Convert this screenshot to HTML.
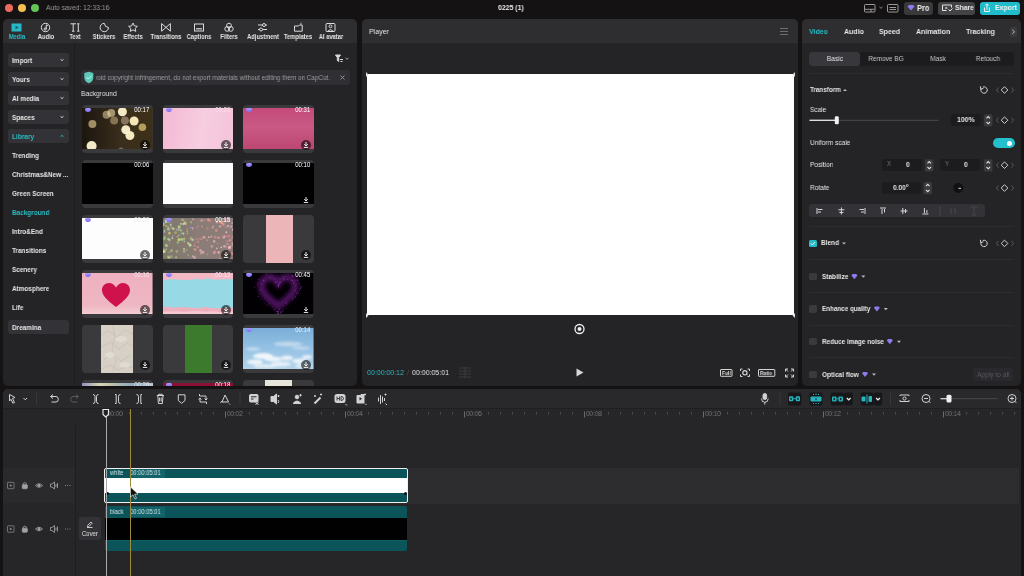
<!DOCTYPE html>
<html><head><meta charset="utf-8">
<style>
*{margin:0;padding:0;box-sizing:border-box}
html,body{width:1024px;height:576px;overflow:hidden;background:#141213;font-family:"Liberation Sans",sans-serif;color:#e6e6e6;position:relative}
.a{position:absolute}
.t{position:absolute;will-change:transform;white-space:nowrap;height:12px;line-height:12px;font-size:7.6px;transform:scaleX(.87);transform-origin:0 50%}
.t.c{transform-origin:50% 50%}
.b{font-weight:bold}
.c{text-align:center}
.panel{position:absolute;background:#242325;border-radius:5px;overflow:hidden}
.hdr{position:absolute;background:#2e2d2f}
.btn{position:absolute;background:#333236;border-radius:3px}
.card{position:absolute;width:70.5px;height:47.5px;background:#3a393b;border-radius:4px;overflow:hidden}
.img{position:absolute;left:0;right:0;top:2.8px;bottom:3.3px;overflow:hidden}
.dl{position:absolute;right:2.5px;bottom:3px;width:10px;height:10px;border-radius:50%;background:rgba(0,0,0,.58)}
.dur{position:absolute;right:3px;top:1px;font-size:6.9px;line-height:7px;color:#fff;transform:scaleX(.87);transform-origin:100% 50%}
.gem{position:absolute;left:3px;top:2.5px;width:6px;height:4.5px;background:linear-gradient(180deg,#a99cff,#7d6cf0);border-radius:2px 2px 3px 3px}
.sep{position:absolute;height:1px;background:#2c2b2e}
.tab{position:absolute;top:23px;width:20px;height:10px}
svg{position:absolute;overflow:visible}
</style></head><body>

<!-- ============ TITLE BAR ============ -->
<div class="a" style="left:5px;top:4px;width:8px;height:8px;border-radius:50%;background:#ec6a5e"></div>
<div class="a" style="left:18px;top:4px;width:8px;height:8px;border-radius:50%;background:#f4bf4f"></div>
<div class="a" style="left:31px;top:4px;width:8px;height:8px;border-radius:50%;background:#62c554"></div>
<div class="t" style="left:46px;top:2px;color:#9b9b9b;font-size:7.70px">Auto saved: 12:33:16</div>
<div class="t b" style="left:498.4px;top:2px;color:#eee;font-size:7.95px">0225 (1)</div>

<svg style="left:0;top:0" width="1024" height="20" viewBox="0 0 1024 20" fill="none" stroke="#9a9a9a" stroke-width="1">
  <rect x="864.5" y="4.5" width="10.5" height="7.5" rx=".8"/><path d="M865 9.3 H874.5 M871 9.3 V12"/>
  <path d="M879.5 7 L881 8.3 L882.5 7" stroke="#8a8a8a"/>
  <rect x="887.5" y="4.5" width="10.5" height="7.5" rx=".8"/><path d="M889.5 7.5 H896 M889.5 9.5 H896"/>
</svg>
<div class="a" style="left:904px;top:2px;width:29px;height:12.5px;background:#39383b;border-radius:3px"></div>
<div class="a" style="left:938px;top:2px;width:37px;height:12.5px;background:#434245;border-radius:3px"></div>
<div class="a" style="left:980px;top:2px;width:40px;height:12.5px;background:#21bccb;border-radius:3px"></div>
<svg style="left:0;top:0" width="1024" height="20" viewBox="0 0 1024 20" fill="none" stroke-width="1">
  <path d="M907.5 6.5 L909 5 H913 L914.5 6.5 L911 10.5Z" fill="#8c7cf2"/>
  <path d="M946.5 10.5 H942.5 V5 H951.5 V7.5" stroke="#e6e6e6"/><path d="M945.5 6.8 L947.8 8 L945.5 9.2Z" fill="#e6e6e6"/><path d="M948.5 9.5 L950 11 L952.5 8.5" stroke="#e6e6e6"/>
  <path d="M984.5 7.5 V11.5 H989.5 V7.5 M987 10 V4 M985.3 5.5 L987 3.8 L988.7 5.5" stroke="#f2f2f2"/>
</svg>
<div class="t b" style="left:917.2px;top:2.4px;font-size:8.6px;color:#eaeaea">Pro</div>
<div class="t b" style="left:954.5px;top:2.2px;font-size:7.82px;color:#eaeaea">Share</div>
<div class="t b" style="left:995.3px;top:2.2px;font-size:7.95px;color:#f4f4f4">Export</div>

<!-- ============ LEFT PANEL ============ -->
<div class="panel" style="left:3px;top:19px;width:354px;height:367px"></div>
<div class="hdr" style="left:3px;top:19px;width:354px;height:24px;border-radius:5px 5px 0 0"></div>
<div class="a" style="left:74px;top:43px;width:1px;height:343px;background:#1c1b1e"></div>

<!-- tab labels -->
<div class="t b c" style="left:-8.5px;width:50px;top:31px;font-size:6.67px;color:#2abdc4">Media</div>
<div class="t b c" style="left:20.5px;width:50px;top:31px;font-size:6.67px">Audio</div>
<div class="t b c" style="left:50px;width:50px;top:31px;font-size:6.67px">Text</div>
<div class="t b c" style="left:79px;width:50px;top:31px;font-size:6.67px">Stickers</div>
<div class="t b c" style="left:108px;width:50px;top:31px;font-size:6.67px">Effects</div>
<div class="t b c" style="left:141px;width:50px;top:31px;font-size:6.67px">Transitions</div>
<div class="t b c" style="left:174px;width:50px;top:31px;font-size:6.67px">Captions</div>
<div class="t b c" style="left:204px;width:50px;top:31px;font-size:6.67px">Filters</div>
<div class="t b c" style="left:237.5px;width:50px;top:31px;font-size:6.67px">Adjustment</div>
<div class="t b c" style="left:273px;width:50px;top:31px;font-size:6.67px">Templates</div>
<div class="t b c" style="left:305.5px;width:50px;top:31px;font-size:6.67px">AI avatar</div>

<!-- tab icons -->
<svg style="left:0;top:0" width="1024" height="50" viewBox="0 0 1024 50" fill="none" stroke="#dcdcdc" stroke-width="1">
  <!-- media -->
  <rect x="11.5" y="23.5" width="10" height="8" fill="#27b9c6" stroke="none"/>
  <path d="M15.5 25.8 L19 27.5 L15.5 29.2Z" fill="#1f5d66" stroke="none"/>
  <!-- audio -->
  <circle cx="45.5" cy="27.5" r="4.2"/>
  <path d="M46.3 24.8 V29 M46.3 25 L47.8 25.6" />
  <circle cx="45.2" cy="29" r="1.1"/>
  <!-- text TI -->
  <path d="M70.5 23.8 H76 M73.2 23.8 V31.2 M72 31.2 H74.5 M78.3 23.8 V31.2 M77.2 23.8 H79.4 M77.2 31.2 H79.4"/>
  <!-- stickers -->
  <path d="M108.5 27.5 A4.2 4.2 0 1 1 104.3 23.3 M104.3 23.3 Q104.6 27.2 108.5 27.5"/>
  <!-- effects star -->
  <path d="M133 23 L134.4 25.9 L137.4 26.3 L135.2 28.4 L135.8 31.4 L133 29.9 L130.2 31.4 L130.8 28.4 L128.6 26.3 L131.6 25.9Z"/>
  <!-- transitions -->
  <path d="M161.6 23.6 L170.4 31.2 V23.6 L161.6 31.2Z"/>
  <!-- captions -->
  <rect x="194.5" y="24" width="9" height="7"/>
  <path d="M196 28.8 H202" stroke-width="1.2"/>
  <!-- filters -->
  <circle cx="229" cy="25.6" r="2.4"/><circle cx="227.2" cy="28.9" r="2.4"/><circle cx="230.8" cy="28.9" r="2.4"/>
  <!-- adjustment -->
  <path d="M258 25 H267 M258 29.5 H267"/>
  <circle cx="264" cy="25" r="1.5" fill="#2a292d"/><circle cx="261" cy="29.5" r="1.5" fill="#2a292d"/>
  <!-- templates -->
  <path d="M294.5 26 H298.5 L299.5 25 H302.2 V31.2 H294.5Z"/>
  <path d="M300 24.4 L301.5 23"/>
  <!-- ai avatar -->
  <rect x="326" y="23.5" width="9" height="8" rx="1"/>
  <circle cx="330.5" cy="26.3" r="1.4"/>
  <path d="M328 31 Q330.5 28.3 333 31"/>
</svg>

<!-- sidebar -->
<div class="btn" style="left:8px;top:53px;width:61px;height:14px"></div>
<div class="btn" style="left:8px;top:72px;width:61px;height:14px"></div>
<div class="btn" style="left:8px;top:91px;width:61px;height:14px"></div>
<div class="btn" style="left:8px;top:110px;width:61px;height:14px"></div>
<div class="btn" style="left:8px;top:129px;width:61px;height:14px"></div>
<div class="t b" style="left:12px;top:54.7px;font-size:7.47px">Import</div>
<div class="t b" style="left:12px;top:73.7px;font-size:7.47px">Yours</div>
<div class="t b" style="left:12px;top:92.7px;font-size:7.47px">AI media</div>
<div class="t b" style="left:12px;top:111.7px;font-size:7.47px">Spaces</div>
<div class="t b" style="left:12px;top:130.7px;font-size:7.47px;color:#2abdc4">Library</div>
<svg style="left:0;top:0" width="80" height="150" viewBox="0 0 80 150" fill="none" stroke="#cfcfcf" stroke-width="1">
  <path d="M60.5 59.3 L62 60.6 L63.5 59.3 M60.5 78.3 L62 79.6 L63.5 78.3 M60.5 97.3 L62 98.6 L63.5 97.3 M60.5 116.3 L62 117.6 L63.5 116.3"/>
  <path d="M60.5 136.7 L62 135.4 L63.5 136.7" stroke="#27b9c6"/>
</svg>
<div class="t b" style="left:12px;top:149.7px;font-size:7.36px">Trending</div>
<div class="t b" style="left:12px;top:168.7px;font-size:7.36px">Christmas&amp;New ...</div>
<div class="t b" style="left:12px;top:187.7px;font-size:7.36px">Green Screen</div>
<div class="t b" style="left:12px;top:206.7px;font-size:7.36px;color:#2abdc4">Background</div>
<div class="t b" style="left:12px;top:225.7px;font-size:7.36px">Intro&amp;End</div>
<div class="t b" style="left:12px;top:244.7px;font-size:7.36px">Transitions</div>
<div class="t b" style="left:12px;top:263.7px;font-size:7.36px">Scenery</div>
<div class="t b" style="left:12px;top:282.7px;font-size:7.36px">Atmosphere</div>
<div class="t b" style="left:12px;top:301.7px;font-size:7.36px">Life</div>
<div class="btn" style="left:8px;top:320px;width:61px;height:14px"></div>
<div class="t b" style="left:12px;top:321.7px;font-size:7.36px">Dreamina</div>

<!-- content header -->
<svg style="left:0;top:0" width="360" height="70" viewBox="0 0 360 70" fill="none" stroke="#d8d8d8" stroke-width="1">
  <path d="M335.5 55 H340.5 L338.7 57.5 V61.5 L337.3 60.5 V57.5Z" fill="#d8d8d8"/>
  <path d="M340 59.5 H343 M340.5 61.5 H342.5"/>
  <path d="M345.5 58 L347 59.3 L348.5 58" stroke="#aaa"/>
</svg>
<div class="a" style="left:81px;top:70px;width:269px;height:15px;background:#302f33;border-radius:3px"></div>
<svg style="left:0;top:0" width="360" height="90" viewBox="0 0 360 90" fill="none">
  <path d="M84.3 73 L88.8 71.8 L93.3 73 V77.5 Q93.3 81.5 88.8 83.3 Q84.3 81.5 84.3 77.5Z" fill="#5ecbb8"/>
  <path d="M86.6 77.3 L88.3 79 L91.2 75.8" stroke="#dff" stroke-width=".9"/>
  <path d="M340.5 75.5 L344.5 79.5 M344.5 75.5 L340.5 79.5" stroke="#9a9a9a" stroke-width=".9"/>
</svg>
<div class="a" style="left:95.5px;top:70px;width:240px;height:15px;overflow:hidden"><div class="t" style="left:-1.6px;top:1.5px;font-size:7.3px;color:#9d9d9d">void copyright infringement, do not export materials without editing them on CapCut.</div></div>
<div class="t" style="left:81px;top:88px;font-size:7.70px;color:#e0e0e0">Background</div>

<!-- thumbnails -->
<div class="a" style="left:0;top:0;width:357px;height:386px;overflow:hidden">
<div class="card" style="left:82px;top:105px"><div class="img"><svg width="70.5" height="42" viewBox="0 0 70.5 42" style="left:0;top:0"><defs><linearGradient id="bk" x1="0" x2="1"><stop offset="0" stop-color="#1c160e"/><stop offset=".55" stop-color="#3a2e1c"/><stop offset="1" stop-color="#3c3018"/></linearGradient><filter id="f1" x="-20%" y="-20%" width="140%" height="140%"><feGaussianBlur stdDeviation=".7"/></filter></defs><rect width="70.5" height="42" fill="url(#bk)"/><g filter="url(#f1)"><circle cx="24.6" cy="6.7" r="4" fill="#e8d2a0" opacity="0.55"/><circle cx="29.2" cy="5" r="4" fill="#ecd8a8" opacity="0.6"/><circle cx="40.4" cy="3.8" r="4.5" fill="#fff4cc" opacity="0.95"/><circle cx="32.1" cy="12.5" r="4" fill="#d8bc88" opacity="0.5"/><circle cx="42.9" cy="12.5" r="4" fill="#e0c8b0" opacity="0.45"/><circle cx="52.1" cy="13" r="4.5" fill="#fff0c0" opacity="0.95"/><circle cx="60.4" cy="19.2" r="3.8" fill="#e8cc78" opacity="0.7"/><circle cx="10.4" cy="15.9" r="4" fill="#e6c890" opacity="0.65"/><circle cx="43.8" cy="21.7" r="4.5" fill="#fff4d0" opacity="0.95"/><circle cx="47.9" cy="27.5" r="4.5" fill="#fff2c8" opacity="0.95"/><circle cx="9.6" cy="38" r="5" fill="#fff4d0" opacity="0.95"/><circle cx="39" cy="42" r="2.5" fill="#ccc" opacity="0.4"/></g></svg></div><div class="gem"></div><div class="dur" style="color:#fff">00:17</div><div class="dl"><svg width="10" height="10" viewBox="0 0 10 10"><path d="M5 2 V5.8 M3.2 4.2 L5 6 L6.8 4.2 M2.8 7.4 H7.2" stroke="#f0f0f0" stroke-width="1" fill="none"/></svg></div></div>
<div class="card" style="left:162.5px;top:105px"><div class="img" style="background:linear-gradient(100deg,#f3b8d2,#f7cde0 55%,#f4c3d9)"></div><div class="gem"></div><div class="dur" style="color:#f8e0ea">00:20</div><div class="dl"><svg width="10" height="10" viewBox="0 0 10 10"><path d="M5 2 V5.8 M3.2 4.2 L5 6 L6.8 4.2 M2.8 7.4 H7.2" stroke="#f0f0f0" stroke-width="1" fill="none"/></svg></div></div>
<div class="card" style="left:243px;top:105px"><div class="img" style="background:linear-gradient(180deg,#c4497a,#c95a84 45%,#bd4672)"></div><div class="gem"></div><div class="dur" style="color:#fff">00:31</div><div class="dl"><svg width="10" height="10" viewBox="0 0 10 10"><path d="M5 2 V5.8 M3.2 4.2 L5 6 L6.8 4.2 M2.8 7.4 H7.2" stroke="#f0f0f0" stroke-width="1" fill="none"/></svg></div></div>
<div class="card" style="left:82px;top:160px"><div class="img" style="background:#010101"></div><div class="dur" style="color:#fff">00:06</div></div>
<div class="card" style="left:162.5px;top:160px"><div class="img" style="background:#fefefe"></div></div>
<div class="card" style="left:243px;top:160px"><div class="img" style="background:#010101"></div><div class="gem"></div><div class="dur" style="color:#fff">00:10</div><div class="dl" style="background:transparent"><svg width="10" height="10" viewBox="0 0 10 10"><path d="M5 2 V5.8 M3.2 4.2 L5 6 L6.8 4.2 M2.8 7.4 H7.2" stroke="#f0f0f0" stroke-width="1" fill="none"/></svg></div></div>
<div class="card" style="left:82px;top:215px"><div class="img" style="background:#fdfdfd"></div><div class="gem"></div><div class="dur" style="color:#eee">00:20</div><div class="dl"><svg width="10" height="10" viewBox="0 0 10 10"><path d="M5 2 V5.8 M3.2 4.2 L5 6 L6.8 4.2 M2.8 7.4 H7.2" stroke="#f0f0f0" stroke-width="1" fill="none"/></svg></div></div>
<div class="card" style="left:162.5px;top:215px"><div class="img"><svg width="70.5" height="42" viewBox="0 0 70.5 42" style="left:0;top:0"><defs><linearGradient id="gg" x1="0" x2="1"><stop offset="0" stop-color="#7e786a"/><stop offset=".5" stop-color="#8a7c76"/><stop offset="1" stop-color="#8e7c7a"/></linearGradient><filter id="gb" x="-10%" y="-10%" width="120%" height="120%"><feGaussianBlur stdDeviation=".45"/></filter></defs><rect width="70.5" height="42" fill="url(#gg)"/><g filter="url(#gb)"><circle cx="22.8" cy="6.3" r="0.74" fill="#e0f0a0" opacity="0.75"/><circle cx="6.6" cy="24.5" r="0.89" fill="#b0a0ff" opacity="0.35"/><circle cx="29.5" cy="10.1" r="1.08" fill="#b0a0ff" opacity="0.75"/><circle cx="8.7" cy="9.4" r="1.22" fill="#e0f0a0" opacity="0.33"/><circle cx="41.3" cy="2.1" r="0.74" fill="#f090a0" opacity="0.77"/><circle cx="20.4" cy="6.1" r="1.21" fill="#d8f070" opacity="0.61"/><circle cx="48.1" cy="4.3" r="1.28" fill="#d07080" opacity="0.50"/><circle cx="38.6" cy="2.6" r="1.26" fill="#ffb0c0" opacity="0.57"/><circle cx="37.5" cy="32.6" r="1.23" fill="#ffe0e0" opacity="0.55"/><circle cx="21.1" cy="33.4" r="1.40" fill="#e0f0a0" opacity="0.35"/><circle cx="21.2" cy="20.8" r="1.36" fill="#f0e070" opacity="0.46"/><circle cx="69.1" cy="5.0" r="0.85" fill="#ffe0e0" opacity="0.49"/><circle cx="65.8" cy="17.7" r="0.77" fill="#e8a090" opacity="0.61"/><circle cx="55.6" cy="34.4" r="1.33" fill="#f0c0c8" opacity="0.63"/><circle cx="40.9" cy="19.2" r="1.55" fill="#ffb0c0" opacity="0.56"/><circle cx="46.8" cy="2.5" r="0.98" fill="#e8a090" opacity="0.62"/><circle cx="48.0" cy="18.7" r="1.05" fill="#e8a090" opacity="0.67"/><circle cx="1.6" cy="19.4" r="1.25" fill="#a0f090" opacity="0.57"/><circle cx="15.4" cy="12.1" r="0.92" fill="#e0f0a0" opacity="0.52"/><circle cx="61.4" cy="3.4" r="1.06" fill="#ffe0e0" opacity="0.45"/><circle cx="9.7" cy="18.1" r="0.95" fill="#b0a0ff" opacity="0.53"/><circle cx="25.3" cy="37.1" r="0.84" fill="#a0f090" opacity="0.40"/><circle cx="16.4" cy="9.8" r="1.45" fill="#c8f0b0" opacity="0.40"/><circle cx="19.9" cy="6.1" r="1.03" fill="#b0a0ff" opacity="0.61"/><circle cx="67.2" cy="29.0" r="1.56" fill="#d07080" opacity="0.66"/><circle cx="52.2" cy="19.2" r="1.42" fill="#e8a090" opacity="0.52"/><circle cx="28.1" cy="4.3" r="1.06" fill="#e0f0a0" opacity="0.40"/><circle cx="69.4" cy="18.5" r="1.01" fill="#ffb0c0" opacity="0.33"/><circle cx="0.0" cy="6.4" r="1.55" fill="#d8f070" opacity="0.64"/><circle cx="5.0" cy="8.7" r="0.83" fill="#c8f0b0" opacity="0.44"/><circle cx="24.5" cy="15.3" r="0.80" fill="#d8f070" opacity="0.57"/><circle cx="68.9" cy="20.2" r="0.78" fill="#f0c0c8" opacity="0.36"/><circle cx="24.2" cy="11.1" r="0.85" fill="#e0f0a0" opacity="0.31"/><circle cx="67.0" cy="22.2" r="1.32" fill="#f090a0" opacity="0.80"/><circle cx="53.4" cy="12.5" r="1.48" fill="#e8a090" opacity="0.68"/><circle cx="18.4" cy="15.4" r="1.02" fill="#a0f090" opacity="0.42"/><circle cx="38.2" cy="21.1" r="0.90" fill="#e8a090" opacity="0.75"/><circle cx="69.4" cy="35.8" r="1.44" fill="#f090a0" opacity="0.71"/><circle cx="16.0" cy="21.7" r="1.36" fill="#f0e070" opacity="0.84"/><circle cx="55.7" cy="19.8" r="1.32" fill="#f090a0" opacity="0.83"/><circle cx="31.5" cy="39.4" r="1.56" fill="#f0c0c8" opacity="0.50"/><circle cx="15.5" cy="9.5" r="1.00" fill="#a0f090" opacity="0.57"/><circle cx="69.5" cy="25.6" r="1.13" fill="#ffb0c0" opacity="0.66"/><circle cx="56.4" cy="3.6" r="0.81" fill="#e8a090" opacity="0.51"/><circle cx="50.2" cy="8.4" r="1.09" fill="#f090a0" opacity="0.65"/><circle cx="6.1" cy="39.7" r="1.06" fill="#e0f0a0" opacity="0.52"/><circle cx="66.7" cy="30.4" r="1.59" fill="#f090a0" opacity="0.32"/><circle cx="41.7" cy="19.5" r="0.83" fill="#e8a090" opacity="0.75"/><circle cx="69.1" cy="27.6" r="0.84" fill="#f0c0c8" opacity="0.60"/><circle cx="1.5" cy="33.6" r="1.28" fill="#e0f0a0" opacity="0.59"/><circle cx="65.8" cy="18.2" r="1.44" fill="#f090a0" opacity="0.42"/><circle cx="17.8" cy="12.3" r="1.39" fill="#a0f090" opacity="0.48"/><circle cx="38.4" cy="35.0" r="1.52" fill="#ffb0c0" opacity="0.49"/><circle cx="32.3" cy="24.5" r="1.08" fill="#d07080" opacity="0.80"/><circle cx="35.4" cy="22.3" r="1.16" fill="#d07080" opacity="0.78"/><circle cx="54.7" cy="25.6" r="0.86" fill="#f090a0" opacity="0.56"/><circle cx="51.1" cy="23.4" r="1.31" fill="#f0c0c8" opacity="0.59"/><circle cx="34.0" cy="32.6" r="0.75" fill="#d07080" opacity="0.41"/><circle cx="3.0" cy="4.1" r="1.21" fill="#c8f0b0" opacity="0.72"/><circle cx="64.3" cy="18.6" r="1.58" fill="#d07080" opacity="0.63"/><circle cx="14.1" cy="11.6" r="1.18" fill="#b0a0ff" opacity="0.56"/><circle cx="66.4" cy="29.4" r="1.53" fill="#f0c0c8" opacity="0.79"/><circle cx="14.3" cy="18.8" r="0.81" fill="#c8f0b0" opacity="0.54"/><circle cx="5.1" cy="10.1" r="0.89" fill="#d8f070" opacity="0.47"/><circle cx="8.6" cy="32.6" r="1.28" fill="#e0f0a0" opacity="0.50"/><circle cx="17.8" cy="5.8" r="0.90" fill="#c8f0b0" opacity="0.82"/><circle cx="28.1" cy="20.5" r="1.45" fill="#e0f0a0" opacity="0.39"/><circle cx="30.4" cy="21.7" r="1.08" fill="#f0c0c8" opacity="0.50"/><circle cx="6.5" cy="15.4" r="1.20" fill="#f0e070" opacity="0.54"/><circle cx="1.3" cy="13.9" r="0.97" fill="#b0a0ff" opacity="0.83"/><circle cx="8.0" cy="38.6" r="1.57" fill="#a0f090" opacity="0.36"/><circle cx="18.7" cy="1.7" r="0.94" fill="#a0f090" opacity="0.37"/><circle cx="29.8" cy="38.3" r="1.07" fill="#f0c0c8" opacity="0.60"/><circle cx="36.3" cy="20.8" r="0.78" fill="#f0c0c8" opacity="0.33"/><circle cx="48.5" cy="17.9" r="0.94" fill="#ffb0c0" opacity="0.31"/><circle cx="6.2" cy="10.9" r="1.47" fill="#b0a0ff" opacity="0.34"/><circle cx="60.8" cy="19.1" r="1.59" fill="#f0c0c8" opacity="0.53"/><circle cx="64.5" cy="26.1" r="1.17" fill="#ffb0c0" opacity="0.43"/><circle cx="7.7" cy="6.8" r="0.86" fill="#d8f070" opacity="0.81"/><circle cx="44.3" cy="22.3" r="0.96" fill="#f090a0" opacity="0.58"/><circle cx="12.5" cy="14.6" r="1.60" fill="#d8f070" opacity="0.32"/><circle cx="1.3" cy="21.2" r="1.16" fill="#a0f090" opacity="0.44"/><circle cx="31.5" cy="27.6" r="1.09" fill="#e8a090" opacity="0.57"/><circle cx="58.8" cy="16.5" r="0.98" fill="#d07080" opacity="0.42"/><circle cx="16.2" cy="8.3" r="1.36" fill="#e0f0a0" opacity="0.38"/><circle cx="69.8" cy="41.2" r="0.71" fill="#f090a0" opacity="0.64"/><circle cx="62.0" cy="18.1" r="0.78" fill="#ffb0c0" opacity="0.76"/><circle cx="61.4" cy="28.2" r="1.24" fill="#f0c0c8" opacity="0.68"/><circle cx="3.2" cy="7.8" r="1.10" fill="#f0e070" opacity="0.44"/><circle cx="67.8" cy="40.9" r="0.99" fill="#d07080" opacity="0.32"/><circle cx="62.2" cy="9.2" r="0.70" fill="#f090a0" opacity="0.51"/><circle cx="33.5" cy="21.1" r="0.92" fill="#f090a0" opacity="0.73"/><circle cx="6.4" cy="34.3" r="1.06" fill="#a0f090" opacity="0.32"/><circle cx="1.6" cy="12.8" r="0.78" fill="#a0f090" opacity="0.83"/><circle cx="60.2" cy="6.5" r="1.41" fill="#e8a090" opacity="0.63"/><circle cx="53.9" cy="30.3" r="0.83" fill="#ffe0e0" opacity="0.70"/><circle cx="45.3" cy="1.8" r="1.50" fill="#e8a090" opacity="0.65"/><circle cx="51.7" cy="34.1" r="1.52" fill="#f090a0" opacity="0.71"/><circle cx="40.1" cy="34.1" r="1.44" fill="#ffb0c0" opacity="0.62"/><circle cx="62.9" cy="28.7" r="1.28" fill="#e8a090" opacity="0.35"/><circle cx="3.0" cy="26.8" r="1.04" fill="#d8f070" opacity="0.55"/><circle cx="3.6" cy="0.8" r="1.31" fill="#b0a0ff" opacity="0.57"/><circle cx="0.2" cy="33.5" r="1.54" fill="#e0f0a0" opacity="0.79"/><circle cx="6.5" cy="22.1" r="1.36" fill="#e0f0a0" opacity="0.44"/><circle cx="5.2" cy="11.2" r="1.38" fill="#e0f0a0" opacity="0.43"/><circle cx="45.8" cy="19.3" r="0.77" fill="#ffe0e0" opacity="0.80"/><circle cx="20.3" cy="2.0" r="1.28" fill="#e0f0a0" opacity="0.34"/><circle cx="10.4" cy="10.7" r="1.32" fill="#e0f0a0" opacity="0.64"/><circle cx="9.4" cy="20.3" r="0.94" fill="#c8f0b0" opacity="0.67"/><circle cx="48.8" cy="28.4" r="1.34" fill="#f0c0c8" opacity="0.46"/><circle cx="32.8" cy="32.2" r="0.88" fill="#d07080" opacity="0.84"/><circle cx="66.0" cy="0.7" r="0.77" fill="#ffe0e0" opacity="0.58"/><circle cx="70.1" cy="41.7" r="0.89" fill="#ffe0e0" opacity="0.82"/><circle cx="14.9" cy="24.4" r="1.37" fill="#a0f090" opacity="0.44"/><circle cx="25.3" cy="25.3" r="1.16" fill="#e0f0a0" opacity="0.79"/><circle cx="49.6" cy="9.7" r="1.05" fill="#ffe0e0" opacity="0.39"/><circle cx="67.0" cy="28.6" r="0.97" fill="#ffe0e0" opacity="0.38"/><circle cx="24.2" cy="13.3" r="0.70" fill="#f0e070" opacity="0.71"/><circle cx="59.2" cy="5.0" r="1.34" fill="#f090a0" opacity="0.80"/><circle cx="20.4" cy="15.6" r="1.05" fill="#c8f0b0" opacity="0.78"/><circle cx="5.4" cy="38.9" r="1.47" fill="#f0e070" opacity="0.45"/><circle cx="3.6" cy="27.8" r="1.54" fill="#e0f0a0" opacity="0.44"/><circle cx="18.7" cy="21.5" r="1.40" fill="#a0f090" opacity="0.73"/><circle cx="30.2" cy="1.2" r="1.06" fill="#e8a090" opacity="0.78"/><circle cx="39.1" cy="8.5" r="0.74" fill="#ffb0c0" opacity="0.70"/><circle cx="31.8" cy="31.6" r="1.48" fill="#e8a090" opacity="0.57"/><circle cx="64.3" cy="23.1" r="1.12" fill="#f090a0" opacity="0.49"/><circle cx="21.0" cy="31.0" r="0.93" fill="#e0f0a0" opacity="0.66"/><circle cx="21.2" cy="23.4" r="0.81" fill="#c8f0b0" opacity="0.65"/><circle cx="5.3" cy="21.0" r="1.20" fill="#c8f0b0" opacity="0.55"/><circle cx="23.5" cy="31.9" r="0.83" fill="#c8f0b0" opacity="0.41"/><circle cx="6.4" cy="14.4" r="0.99" fill="#d8f070" opacity="0.50"/><circle cx="57.1" cy="8.5" r="1.37" fill="#ffb0c0" opacity="0.53"/><circle cx="29.2" cy="22.0" r="0.94" fill="#c8f0b0" opacity="0.71"/><circle cx="35.1" cy="24.1" r="0.81" fill="#f0c0c8" opacity="0.58"/><circle cx="44.4" cy="36.2" r="0.78" fill="#f090a0" opacity="0.79"/><circle cx="27.1" cy="27.1" r="1.56" fill="#c8f0b0" opacity="0.77"/><circle cx="61.5" cy="0.9" r="1.08" fill="#ffb0c0" opacity="0.72"/><circle cx="56.7" cy="40.7" r="0.70" fill="#ffe0e0" opacity="0.52"/><circle cx="65.3" cy="34.7" r="1.58" fill="#ffe0e0" opacity="0.44"/><circle cx="7.7" cy="6.5" r="1.57" fill="#b0a0ff" opacity="0.36"/><circle cx="58.2" cy="29.4" r="0.78" fill="#ffe0e0" opacity="0.73"/><circle cx="0.1" cy="5.3" r="1.53" fill="#b0a0ff" opacity="0.66"/><circle cx="21.4" cy="5.4" r="1.18" fill="#f0e070" opacity="0.54"/><circle cx="53.9" cy="4.2" r="1.17" fill="#f0c0c8" opacity="0.62"/><circle cx="27.4" cy="9.4" r="0.70" fill="#b0a0ff" opacity="0.60"/><circle cx="70.2" cy="11.7" r="1.28" fill="#f0c0c8" opacity="0.79"/><circle cx="33.5" cy="9.9" r="0.73" fill="#f090a0" opacity="0.53"/><circle cx="45.8" cy="2.3" r="1.15" fill="#f090a0" opacity="0.67"/><circle cx="29.6" cy="10.8" r="1.08" fill="#e8a090" opacity="0.50"/><circle cx="34.8" cy="29.2" r="1.08" fill="#e8a090" opacity="0.68"/><circle cx="14.0" cy="33.5" r="1.46" fill="#e0f0a0" opacity="0.34"/><circle cx="34.9" cy="8.4" r="0.91" fill="#f090a0" opacity="0.42"/><circle cx="53.6" cy="12.4" r="1.15" fill="#d07080" opacity="0.40"/><circle cx="15.7" cy="17.5" r="0.75" fill="#e0f0a0" opacity="0.63"/><circle cx="65.0" cy="2.3" r="1.58" fill="#ffb0c0" opacity="0.38"/><circle cx="3.7" cy="2.5" r="1.10" fill="#c8f0b0" opacity="0.69"/><circle cx="22.2" cy="4.8" r="1.54" fill="#d8f070" opacity="0.48"/><circle cx="13.1" cy="39.3" r="1.12" fill="#e0f0a0" opacity="0.47"/><circle cx="51.1" cy="35.2" r="1.10" fill="#f0c0c8" opacity="0.36"/><circle cx="5.5" cy="3.4" r="1.56" fill="#c8f0b0" opacity="0.37"/><circle cx="68.0" cy="8.7" r="1.39" fill="#f0c0c8" opacity="0.47"/><circle cx="56.7" cy="3.7" r="1.13" fill="#e8a090" opacity="0.50"/><circle cx="64.8" cy="8.1" r="1.36" fill="#f0c0c8" opacity="0.56"/><circle cx="44.5" cy="10.4" r="1.39" fill="#e8a090" opacity="0.32"/><circle cx="2.5" cy="2.6" r="0.93" fill="#d8f070" opacity="0.71"/><circle cx="63.3" cy="14.2" r="1.00" fill="#f0c0c8" opacity="0.82"/><circle cx="3.1" cy="31.4" r="0.98" fill="#e0f0a0" opacity="0.45"/><circle cx="0.3" cy="31.7" r="1.55" fill="#e0f0a0" opacity="0.34"/><circle cx="58.2" cy="4.5" r="1.56" fill="#e8a090" opacity="0.82"/></g></svg></div><div class="gem"></div><div class="dur" style="color:#fff">00:15</div><div class="dl"><svg width="10" height="10" viewBox="0 0 10 10"><path d="M5 2 V5.8 M3.2 4.2 L5 6 L6.8 4.2 M2.8 7.4 H7.2" stroke="#f0f0f0" stroke-width="1" fill="none"/></svg></div></div>
<div class="card" style="left:243px;top:215px"><div class="a" style="left:22.5px;top:0;width:27px;height:47.5px;background:#ecb6b8"></div><div class="dl"><svg width="10" height="10" viewBox="0 0 10 10"><path d="M5 2 V5.8 M3.2 4.2 L5 6 L6.8 4.2 M2.8 7.4 H7.2" stroke="#f0f0f0" stroke-width="1" fill="none"/></svg></div></div>
<div class="card" style="left:82px;top:270px"><div class="img"><svg width="70.5" height="42" viewBox="0 0 70.5 42" style="left:0;top:0"><defs><linearGradient id="ph" x1="0" y1="0" x2="0" y2="1"><stop offset="0" stop-color="#efb0c0"/><stop offset=".75" stop-color="#eeb6c2"/><stop offset="1" stop-color="#f4cdd2"/></linearGradient></defs><rect width="70.5" height="42" fill="url(#ph)"/><path transform="translate(20 10)" d="M14 24 C5 17 0 12.5 0 7 C0 3 3 0 7 0 C10 0 12.5 2 14 4.5 C15.5 2 18 0 21 0 C25 0 28 3 28 7 C28 12.5 23 17 14 24Z" fill="#d0124c"/></svg></div><div class="gem"></div><div class="dur" style="color:#f6dde4">00:16</div><div class="dl"><svg width="10" height="10" viewBox="0 0 10 10"><path d="M5 2 V5.8 M3.2 4.2 L5 6 L6.8 4.2 M2.8 7.4 H7.2" stroke="#f0f0f0" stroke-width="1" fill="none"/></svg></div></div>
<div class="card" style="left:162.5px;top:270px"><div class="img"><svg width="70.5" height="42" viewBox="0 0 70.5 42" style="left:0;top:0"><rect width="70.5" height="42" fill="#98d9e6"/><path d="M0 0 H70.5 V6.5 Q66.6 5.7 62.7 6.6 Q58.8 6.1 54.8 6.7 Q50.9 6.9 47.0 5.8 Q43.1 5.0 39.2 7.0 Q35.3 5.8 31.3 6.1 Q27.4 8.0 23.5 6.5 Q19.6 7.5 15.7 6.5 Q11.8 6.9 7.8 6.0 Q3.9 6.9 0.0 7.1Z" fill="#f2b9c4"/><path d="M0 42 H70.5 V34.5 Q66.6 34.9 62.7 34.9 Q58.8 35.4 54.8 35.2 Q50.9 35.2 47.0 35.1 Q43.1 33.1 39.2 34.4 Q35.3 35.8 31.3 34.7 Q27.4 35.7 23.5 33.9 Q19.6 34.4 15.7 34.1 Q11.8 34.6 7.8 34.6 Q3.9 33.0 0.0 34.1Z" fill="#efb0bd"/><path d="M0 42 H70.5 V38.5 Q63.5 38.1 56.4 38.9 Q49.4 37.9 42.3 38.7 Q35.2 37.8 28.2 38.3 Q21.2 39.3 14.1 38.3 Q7.1 38.7 0.0 38.5Z" fill="#f6c9d1"/></svg></div><div class="gem"></div><div class="dur" style="color:#fde">00:13</div><div class="dl"><svg width="10" height="10" viewBox="0 0 10 10"><path d="M5 2 V5.8 M3.2 4.2 L5 6 L6.8 4.2 M2.8 7.4 H7.2" stroke="#f0f0f0" stroke-width="1" fill="none"/></svg></div></div>
<div class="card" style="left:243px;top:270px"><div class="img"><svg width="70.5" height="42" viewBox="0 0 70.5 42" style="left:0;top:0"><rect width="70.5" height="42" fill="#020003"/><defs><filter id="pf" x="-30%" y="-30%" width="160%" height="160%"><feGaussianBlur stdDeviation="1.6"/></filter></defs><path transform="translate(18.5 4.5) scale(1.2)" d="M14 24 C5 17 0 12.5 0 7 C0 3 3 0 7 0 C10 0 12.5 2 14 4.5 C15.5 2 18 0 21 0 C25 0 28 3 28 7 C28 12.5 23 17 14 24Z" fill="none" stroke="#5e1874" stroke-width="6" opacity=".8" filter="url(#pf)"/><circle cx="40.6" cy="32.8" r=".5" fill="#a040c0" opacity="0.46"/><circle cx="35.3" cy="45.9" r=".5" fill="#a040c0" opacity="0.31"/><circle cx="15.8" cy="6.2" r=".5" fill="#a040c0" opacity="0.69"/><circle cx="14.0" cy="10.9" r=".5" fill="#a040c0" opacity="0.40"/><circle cx="50.2" cy="25.1" r=".5" fill="#a040c0" opacity="0.67"/><circle cx="37.3" cy="9.5" r=".5" fill="#a040c0" opacity="0.65"/><circle cx="53.0" cy="15.2" r=".5" fill="#a040c0" opacity="0.22"/><circle cx="34.6" cy="39.0" r=".5" fill="#a040c0" opacity="0.79"/><circle cx="27.8" cy="2.5" r=".5" fill="#a040c0" opacity="0.36"/><circle cx="37.6" cy="9.5" r=".5" fill="#a040c0" opacity="0.50"/><circle cx="16.4" cy="21.0" r=".5" fill="#a040c0" opacity="0.34"/><circle cx="38.0" cy="38.3" r=".5" fill="#a040c0" opacity="0.60"/><circle cx="11.5" cy="14.4" r=".5" fill="#a040c0" opacity="0.60"/><circle cx="43.0" cy="3.0" r=".5" fill="#a040c0" opacity="0.38"/><circle cx="33.9" cy="38.2" r=".5" fill="#a040c0" opacity="0.64"/><circle cx="51.7" cy="8.7" r=".5" fill="#a040c0" opacity="0.35"/><circle cx="48.6" cy="2.2" r=".5" fill="#a040c0" opacity="0.55"/><circle cx="49.4" cy="26.1" r=".5" fill="#a040c0" opacity="0.80"/><circle cx="35.2" cy="40.2" r=".5" fill="#a040c0" opacity="0.69"/><circle cx="21.5" cy="30.7" r=".5" fill="#a040c0" opacity="0.26"/><circle cx="35.3" cy="44.5" r=".5" fill="#a040c0" opacity="0.70"/><circle cx="32.9" cy="9.6" r=".5" fill="#a040c0" opacity="0.38"/><circle cx="41.2" cy="6.7" r=".5" fill="#a040c0" opacity="0.78"/><circle cx="32.2" cy="40.3" r=".5" fill="#a040c0" opacity="0.42"/><circle cx="26.7" cy="4.7" r=".5" fill="#a040c0" opacity="0.36"/><circle cx="11.8" cy="9.0" r=".5" fill="#a040c0" opacity="0.26"/><circle cx="31.2" cy="36.8" r=".5" fill="#a040c0" opacity="0.33"/><circle cx="42.5" cy="30.3" r=".5" fill="#a040c0" opacity="0.32"/><circle cx="57.1" cy="15.3" r=".5" fill="#a040c0" opacity="0.59"/><circle cx="50.5" cy="10.2" r=".5" fill="#a040c0" opacity="0.40"/><circle cx="21.6" cy="25.0" r=".5" fill="#a040c0" opacity="0.39"/><circle cx="55.8" cy="6.7" r=".5" fill="#a040c0" opacity="0.53"/><circle cx="36.3" cy="11.2" r=".5" fill="#a040c0" opacity="0.44"/><circle cx="34.6" cy="41.5" r=".5" fill="#a040c0" opacity="0.25"/><circle cx="49.5" cy="3.6" r=".5" fill="#a040c0" opacity="0.45"/><circle cx="53.6" cy="20.0" r=".5" fill="#a040c0" opacity="0.77"/><circle cx="52.3" cy="24.4" r=".5" fill="#a040c0" opacity="0.41"/><circle cx="38.3" cy="39.8" r=".5" fill="#a040c0" opacity="0.80"/><circle cx="43.3" cy="30.0" r=".5" fill="#a040c0" opacity="0.64"/><circle cx="50.5" cy="10.2" r=".5" fill="#a040c0" opacity="0.74"/><circle cx="37.6" cy="40.3" r=".5" fill="#a040c0" opacity="0.44"/><circle cx="28.9" cy="5.3" r=".5" fill="#a040c0" opacity="0.30"/><circle cx="35.3" cy="13.0" r=".5" fill="#a040c0" opacity="0.58"/><circle cx="32.5" cy="9.1" r=".5" fill="#a040c0" opacity="0.57"/><circle cx="43.3" cy="32.2" r=".5" fill="#a040c0" opacity="0.29"/><circle cx="55.2" cy="20.0" r=".5" fill="#a040c0" opacity="0.76"/><circle cx="40.6" cy="5.6" r=".5" fill="#a040c0" opacity="0.68"/><circle cx="35.1" cy="13.1" r=".5" fill="#a040c0" opacity="0.28"/><circle cx="34.2" cy="8.7" r=".5" fill="#a040c0" opacity="0.49"/><circle cx="36.1" cy="9.2" r=".5" fill="#a040c0" opacity="0.43"/><circle cx="31.3" cy="6.0" r=".5" fill="#a040c0" opacity="0.69"/><circle cx="49.3" cy="2.9" r=".5" fill="#a040c0" opacity="0.33"/><circle cx="39.5" cy="38.2" r=".5" fill="#a040c0" opacity="0.70"/><circle cx="49.7" cy="7.4" r=".5" fill="#a040c0" opacity="0.44"/><circle cx="35.2" cy="41.2" r=".5" fill="#a040c0" opacity="0.27"/><circle cx="58.1" cy="13.8" r=".5" fill="#a040c0" opacity="0.74"/><circle cx="35.6" cy="11.5" r=".5" fill="#a040c0" opacity="0.65"/><circle cx="35.6" cy="10.9" r=".5" fill="#a040c0" opacity="0.27"/><circle cx="30.9" cy="36.0" r=".5" fill="#a040c0" opacity="0.58"/><circle cx="52.2" cy="23.3" r=".5" fill="#a040c0" opacity="0.55"/><circle cx="37.3" cy="39.5" r=".5" fill="#a040c0" opacity="0.47"/><circle cx="36.2" cy="36.2" r=".5" fill="#a040c0" opacity="0.57"/><circle cx="35.3" cy="40.2" r=".5" fill="#a040c0" opacity="0.66"/><circle cx="15.5" cy="10.3" r=".5" fill="#a040c0" opacity="0.31"/><circle cx="35.3" cy="38.7" r=".5" fill="#a040c0" opacity="0.28"/><circle cx="36.6" cy="36.1" r=".5" fill="#a040c0" opacity="0.47"/><circle cx="35.2" cy="38.6" r=".5" fill="#a040c0" opacity="0.58"/><circle cx="38.0" cy="6.9" r=".5" fill="#a040c0" opacity="0.67"/><circle cx="35.2" cy="38.7" r=".5" fill="#a040c0" opacity="0.50"/><circle cx="43.5" cy="35.2" r=".5" fill="#a040c0" opacity="0.28"/><circle cx="23.3" cy="1.4" r=".5" fill="#a040c0" opacity="0.64"/><circle cx="20.7" cy="7.6" r=".5" fill="#a040c0" opacity="0.79"/><circle cx="35.3" cy="46.1" r=".5" fill="#a040c0" opacity="0.75"/><circle cx="50.1" cy="3.1" r=".5" fill="#a040c0" opacity="0.76"/><circle cx="36.5" cy="10.1" r=".5" fill="#a040c0" opacity="0.65"/><circle cx="49.6" cy="2.3" r=".5" fill="#a040c0" opacity="0.36"/><circle cx="21.1" cy="7.9" r=".5" fill="#a040c0" opacity="0.50"/><circle cx="33.1" cy="9.4" r=".5" fill="#a040c0" opacity="0.36"/><circle cx="35.2" cy="40.9" r=".5" fill="#a040c0" opacity="0.22"/><circle cx="49.2" cy="7.6" r=".5" fill="#a040c0" opacity="0.76"/><circle cx="17.4" cy="26.2" r=".5" fill="#a040c0" opacity="0.30"/><circle cx="18.4" cy="11.0" r=".5" fill="#a040c0" opacity="0.52"/><circle cx="26.6" cy="30.7" r=".5" fill="#a040c0" opacity="0.72"/><circle cx="34.4" cy="40.7" r=".5" fill="#a040c0" opacity="0.73"/><circle cx="40.9" cy="3.4" r=".5" fill="#a040c0" opacity="0.58"/><circle cx="40.7" cy="36.6" r=".5" fill="#a040c0" opacity="0.36"/><circle cx="35.2" cy="13.1" r=".5" fill="#a040c0" opacity="0.42"/><circle cx="14.8" cy="12.6" r=".5" fill="#a040c0" opacity="0.31"/><circle cx="17.6" cy="16.4" r=".5" fill="#a040c0" opacity="0.69"/><circle cx="57.4" cy="15.1" r=".5" fill="#a040c0" opacity="0.79"/><circle cx="32.2" cy="38.3" r=".5" fill="#a040c0" opacity="0.39"/><circle cx="35.3" cy="14.5" r=".5" fill="#a040c0" opacity="0.29"/><circle cx="29.2" cy="33.4" r=".5" fill="#a040c0" opacity="0.51"/><circle cx="31.1" cy="7.8" r=".5" fill="#a040c0" opacity="0.34"/><circle cx="25.6" cy="27.5" r=".5" fill="#a040c0" opacity="0.20"/><circle cx="44.2" cy="28.7" r=".5" fill="#a040c0" opacity="0.41"/><circle cx="56.2" cy="10.5" r=".5" fill="#a040c0" opacity="0.55"/><circle cx="54.7" cy="7.6" r=".5" fill="#a040c0" opacity="0.48"/><circle cx="45.5" cy="1.9" r=".5" fill="#a040c0" opacity="0.35"/><circle cx="44.7" cy="6.6" r=".5" fill="#a040c0" opacity="0.58"/><circle cx="26.4" cy="3.0" r=".5" fill="#a040c0" opacity="0.44"/><circle cx="52.4" cy="17.5" r=".5" fill="#a040c0" opacity="0.59"/><circle cx="34.1" cy="38.5" r=".5" fill="#a040c0" opacity="0.59"/><circle cx="36.3" cy="43.2" r=".5" fill="#a040c0" opacity="0.64"/><circle cx="59.5" cy="13.7" r=".5" fill="#a040c0" opacity="0.23"/><circle cx="35.1" cy="40.9" r=".5" fill="#a040c0" opacity="0.34"/><circle cx="36.3" cy="9.2" r=".5" fill="#a040c0" opacity="0.21"/><circle cx="34.5" cy="43.7" r=".5" fill="#a040c0" opacity="0.29"/><circle cx="54.1" cy="7.1" r=".5" fill="#a040c0" opacity="0.50"/><circle cx="24.2" cy="31.8" r=".5" fill="#a040c0" opacity="0.30"/><circle cx="51.1" cy="23.6" r=".5" fill="#a040c0" opacity="0.23"/><circle cx="29.1" cy="4.0" r=".5" fill="#a040c0" opacity="0.63"/><circle cx="35.3" cy="12.5" r=".5" fill="#a040c0" opacity="0.65"/><circle cx="35.5" cy="43.4" r=".5" fill="#a040c0" opacity="0.47"/><circle cx="52.7" cy="12.3" r=".5" fill="#a040c0" opacity="0.34"/><circle cx="35.5" cy="12.4" r=".5" fill="#a040c0" opacity="0.65"/><circle cx="15.4" cy="23.6" r=".5" fill="#a040c0" opacity="0.63"/><circle cx="56.5" cy="17.2" r=".5" fill="#a040c0" opacity="0.46"/><circle cx="15.8" cy="9.0" r=".5" fill="#a040c0" opacity="0.36"/><circle cx="23.6" cy="32.3" r=".5" fill="#a040c0" opacity="0.33"/></svg></div><div class="gem"></div><div class="dur" style="color:#fff">00:45</div><div class="dl" style="background:transparent"><svg width="10" height="10" viewBox="0 0 10 10"><path d="M5 2 V5.8 M3.2 4.2 L5 6 L6.8 4.2 M2.8 7.4 H7.2" stroke="#f0f0f0" stroke-width="1" fill="none"/></svg></div></div>
<div class="card" style="left:82px;top:325px"><div class="a" style="left:19px;top:0;width:32px;height:47.5px;background:#d6d0c6;overflow:hidden"><svg width="32" height="47.5" viewBox="0 0 32 47.5" style="left:0;top:0"><defs><filter id="pp"><feGaussianBlur stdDeviation=".6"/></filter></defs><g filter="url(#pp)" fill="none" stroke="#bdb5aa" stroke-width="1" opacity=".45"><path d="M0 10 L8 6 L16 12 L24 5 L32 9"/><path d="M0 22 L10 17 L18 24 L26 18 L32 21"/><path d="M2 35 L12 29 L20 36 L30 30"/><path d="M0 44 L9 40 L17 45 L27 41 L32 43"/><path d="M12 0 L14 12 L11 24 L15 36 L12 47"/></g><g filter="url(#pp)" fill="#e6e1d8" opacity=".7"><ellipse cx="20" cy="14" rx="6" ry="3"/><ellipse cx="9" cy="30" rx="5" ry="3"/><ellipse cx="24" cy="40" rx="5" ry="2.5"/></g></svg></div><div class="dl"><svg width="10" height="10" viewBox="0 0 10 10"><path d="M5 2 V5.8 M3.2 4.2 L5 6 L6.8 4.2 M2.8 7.4 H7.2" stroke="#f0f0f0" stroke-width="1" fill="none"/></svg></div></div>
<div class="card" style="left:162.5px;top:325px"><div class="a" style="left:22px;top:0;width:27px;height:47.5px;background:#3c7a2d"></div><div class="dl"><svg width="10" height="10" viewBox="0 0 10 10"><path d="M5 2 V5.8 M3.2 4.2 L5 6 L6.8 4.2 M2.8 7.4 H7.2" stroke="#f0f0f0" stroke-width="1" fill="none"/></svg></div></div>
<div class="card" style="left:243px;top:325px"><div class="img"><svg width="70.5" height="42" viewBox="0 0 70.5 42" style="left:0;top:0"><defs><linearGradient id="sk" x1="0" y1="0" x2="0" y2="1"><stop offset="0" stop-color="#7aaed8"/><stop offset=".6" stop-color="#9cc6e6"/><stop offset="1" stop-color="#b4d4ea"/></linearGradient><filter id="cf" x="-30%" y="-30%" width="160%" height="160%"><feGaussianBlur stdDeviation="1.2"/></filter></defs><rect width="70.5" height="42" fill="url(#sk)"/><g filter="url(#cf)" fill="#f4f8fc"><ellipse cx="20" cy="28" rx="10" ry="3" opacity="0.95"/><ellipse cx="30" cy="31" rx="9" ry="2.5" opacity="0.9"/><ellipse cx="12" cy="34" rx="8" ry="2.5" opacity="0.9"/><ellipse cx="44" cy="30" rx="6" ry="2.5" opacity="0.85"/><ellipse cx="56" cy="33" rx="7" ry="2.5" opacity="0.85"/><ellipse cx="64" cy="29" rx="5" ry="2" opacity="0.8"/><ellipse cx="38" cy="36" rx="10" ry="2.5" opacity="0.8"/><ellipse cx="22" cy="38" rx="12" ry="2" opacity="0.7"/><ellipse cx="45" cy="16" rx="14" ry="2.5" opacity="0.45"/><ellipse cx="58" cy="20" rx="9" ry="1.8" opacity="0.4"/><ellipse cx="10" cy="21" rx="7" ry="1.8" opacity="0.45"/><ellipse cx="60" cy="38" rx="8" ry="2" opacity="0.7"/></g></svg></div><div class="gem"></div><div class="dur" style="color:#eef">00:14</div><div class="dl"><svg width="10" height="10" viewBox="0 0 10 10"><path d="M5 2 V5.8 M3.2 4.2 L5 6 L6.8 4.2 M2.8 7.4 H7.2" stroke="#f0f0f0" stroke-width="1" fill="none"/></svg></div></div>
<div class="card" style="left:82px;top:380px"><div class="img" style="background:linear-gradient(90deg,#9090c0,#d8d4b0 25%,#b0b8b0 50%,#88a8c0 75%,#c0c8d8)"></div><div class="dur" style="color:#eee">00:20</div></div>
<div class="card" style="left:162.5px;top:380px"><div class="img" style="background:#8c1034"></div><div class="gem"></div><div class="dur" style="color:#fff">00:18</div></div>
<div class="card" style="left:243px;top:380px"><div class="a" style="left:22px;top:0;width:27px;height:47.5px;background:#e6e4da"></div></div>
</div>

<!-- ============ PLAYER ============ -->
<div class="panel" style="left:362px;top:19px;width:436px;height:367px"></div>
<div class="hdr" style="left:362px;top:19px;width:436px;height:24px;border-radius:5px 5px 0 0"></div>
<div class="t" style="left:369px;top:25.5px;font-size:8.05px;color:#e8e8e8">Player</div>
<svg style="left:0;top:0" width="800" height="40" viewBox="0 0 800 40" fill="none" stroke="#6f6e72" stroke-width="1">
  <path d="M780 28.5 H788 M780 31.5 H788 M780 34.5 H788"/>
</svg>
<div class="a" style="left:367px;top:74px;width:427px;height:241px;background:#fff"></div>
<svg style="left:0;top:0" width="800" height="400" viewBox="0 0 800 400" fill="none">
  <path d="M366 72 L368.5 74.5 L366 77Z M795 72 L792.5 74.5 L795 77Z M366 313 L368.5 315.5 L366 318Z M795 313 L792.5 315.5 L795 318Z" fill="#ddd"/>
  <circle cx="579.5" cy="329" r="4.5" stroke="#f0f0f0" stroke-width="1.3"/>
  <circle cx="579.5" cy="329" r="2" fill="#f0f0f0"/>
  <path d="M576.5 368.5 L583.5 372.5 L576.5 376.5Z" fill="#d6d6d6"/>
  <g stroke="#3b3a3d" stroke-width="1"><path d="M459 368 H471 M459 371 H471 M459 374 H471 M459 377 H471 M465 367 V378"/></g>
  <g stroke="#d4d4d4" stroke-width="1">
    <rect x="720.5" y="369.5" width="11.5" height="6.8" rx=".5"/>
    <path d="M740.5 371 V369 H742.5 M747.5 369 H749.5 V371 M749.5 374.5 V376.5 H747.5 M742.5 376.5 H740.5 V374.5"/>
    <circle cx="744.9" cy="372.7" r="2.1" stroke-width="1.2"/><path d="M746.3 374.1 L747.5 375.3"/>
    <rect x="758.5" y="369.5" width="16.3" height="6.8" rx=".5"/>
    <path d="M785.5 371.5 V369 H788 M785.5 369 L788 371.5 M793.5 371.5 V369 H791 M793.5 369 L791 371.5 M785.5 374.5 V377 H788 M785.5 377 L788 374.5 M793.5 374.5 V377 H791 M793.5 377 L791 374.5"/>
  </g>
</svg>
<div class="t b" style="left:721.8px;top:366.9px;font-size:5.6px;color:#dcdcdc">Full</div>
<div class="t b" style="left:759.8px;top:366.9px;font-size:5.6px;color:#dcdcdc">Ratio</div>
<div class="t" style="left:366.5px;top:366.5px;font-size:8.05px;color:#2abdc4">00:00:00:12</div>
<div class="t" style="left:407px;top:366.5px;font-size:7.36px;color:#555">/</div>
<div class="t" style="left:412px;top:366.5px;font-size:8.05px;color:#e8e8e8">00:00:05:01</div>

<!-- ============ RIGHT PANEL ============ -->
<div class="panel" style="left:802px;top:19px;width:219px;height:367px"></div>
<div class="hdr" style="left:802px;top:19px;width:219px;height:24px;border-radius:5px 5px 0 0"></div>
<div class="t b" style="left:808.8px;top:25.5px;font-size:8.05px;color:#2abdc4">Video</div>
<div class="t b" style="left:844px;top:25.5px;font-size:8.05px;color:#e6e6e6">Audio</div>
<div class="t b" style="left:878.8px;top:25.5px;font-size:8.05px;color:#e6e6e6">Speed</div>
<div class="t b" style="left:916.3px;top:25.5px;font-size:8.05px;color:#e6e6e6">Animation</div>
<div class="t b" style="left:966px;top:25.5px;font-size:8.05px;color:#e6e6e6">Tracking</div>
<div class="a" style="left:1010px;top:26.5px;width:7px;height:10.5px;background:#3b3a3e;border-radius:2px"></div>
<div class="a" style="left:809.4px;top:52px;width:205px;height:14px;background:#1c1b1e;border-radius:3px"></div>
<div class="a" style="left:809.4px;top:52px;width:51px;height:14px;background:#38373b;border-radius:3px"></div>
<div class="t c" style="left:805px;width:60px;top:53px;font-size:7.47px;color:#e8e8e8">Basic</div>
<div class="t c" style="left:856px;width:60px;top:53px;font-size:7.47px;color:#c8c8c8">Remove BG</div>
<div class="t c" style="left:907.5px;width:60px;top:53px;font-size:7.47px;color:#c8c8c8">Mask</div>
<div class="t c" style="left:958.4px;width:60px;top:53px;font-size:7.47px;color:#c8c8c8">Retouch</div>
<div class="sep" style="left:809px;top:73px;width:205px"></div>
<div class="sep" style="left:809px;top:226px;width:205px"></div>
<div class="sep" style="left:809px;top:259px;width:205px"></div>
<div class="sep" style="left:809px;top:292px;width:205px"></div>
<div class="sep" style="left:809px;top:325px;width:205px"></div>
<div class="sep" style="left:809px;top:357px;width:205px"></div>
<div class="t b" style="left:809.5px;top:83.6px;font-size:7.24px">Transform</div>
<div class="t" style="left:809.5px;top:103.7px;font-size:7.47px">Scale</div>
<div class="t" style="left:809.5px;top:136.5px;font-size:7.59px">Uniform scale</div>
<div class="t" style="left:809.5px;top:159.2px;font-size:7.59px">Position</div>
<div class="t" style="left:809.5px;top:182px;font-size:7.59px">Rotate</div>
<div class="a" style="left:950.7px;top:114px;width:30.3px;height:12.3px;background:#1c1b1e;border-radius:2px"></div>
<div class="t b" style="left:957px;top:114.2px;font-size:7.93px">100%</div>
<div class="a" style="left:881.5px;top:159px;width:40px;height:12.3px;background:#1c1b1e;border-radius:2px"></div>
<div class="t" style="left:886.5px;top:158px;font-size:6.90px;color:#777">X</div>
<div class="t b" style="left:905.5px;top:159.3px;font-size:7.59px">0</div>
<div class="a" style="left:939.7px;top:159px;width:40.3px;height:12.3px;background:#1c1b1e;border-radius:2px"></div>
<div class="t" style="left:945px;top:158px;font-size:6.90px;color:#777">Y</div>
<div class="t b" style="left:963.5px;top:159.3px;font-size:7.59px">0</div>
<div class="a" style="left:881.5px;top:182px;width:39px;height:12.3px;background:#1c1b1e;border-radius:2px"></div>
<div class="t b" style="left:893px;top:182.2px;font-size:7.59px">0.00°</div>
<div class="a" style="left:992.6px;top:138px;width:22.3px;height:10px;background:#22bfcc;border-radius:5px"></div>
<div class="a" style="left:1007px;top:140.5px;width:5px;height:5px;background:#fff;border-radius:50%"></div>
<div class="a" style="left:809.4px;top:204.4px;width:175.2px;height:13.1px;background:#333236;border-radius:3px"></div>
<div class="a" style="left:809px;top:239.6px;width:7.6px;height:7.6px;background:#27b9c6;border-radius:1.5px"></div>
<div class="a" style="left:809px;top:272.8px;width:7.6px;height:7.6px;background:#3a393d;border-radius:1.5px"></div>
<div class="a" style="left:809px;top:305.2px;width:7.6px;height:7.6px;background:#3a393d;border-radius:1.5px"></div>
<div class="a" style="left:809px;top:337.9px;width:7.6px;height:7.6px;background:#3a393d;border-radius:1.5px"></div>
<div class="a" style="left:809px;top:370.7px;width:7.6px;height:7.6px;background:#3a393d;border-radius:1.5px"></div>
<div class="t b" style="left:821px;top:237.4px;font-size:7.47px">Blend</div>
<div class="t b" style="left:821.6px;top:270.6px;font-size:7.47px">Stabilize</div>
<div class="t b" style="left:821.6px;top:303px;font-size:7.24px">Enhance quality</div>
<div class="t b" style="left:821.6px;top:335.7px;font-size:7.36px">Reduce image noise</div>
<div class="t b" style="left:821.6px;top:368.5px;font-size:7.47px">Optical flow</div>
<div class="a" style="left:972.5px;top:368.4px;width:40.5px;height:12.4px;background:#2a292d;border-radius:2px"></div>
<div class="t c" style="left:972.5px;width:40.5px;top:368.6px;font-size:7.59px;color:#5b5a5e">Apply to all</div>
<svg style="left:0;top:0" width="1024" height="400" viewBox="0 0 1024 400" fill="none" stroke-width="1">
<path d="M1012.3 29.8 L1014.5 31.8 L1012.3 33.8" stroke="#bbb"/>
<path d="M843 91 L845 89 L847 91Z" fill="#bdbdbd"/>
<path d="M981.1 88.8 A3.2 3.2 0 1 0 982.8 87.1" stroke="#d8d8d8" stroke-width="1"/><path d="M980.4 86.4 L980.8 89.2 L983.4 88.4" stroke="#d8d8d8" stroke-width="1"/>
<path d="M998.5 87.5 L996.5 90 L998.5 92.5 M1011.5 87.5 L1013.5 90 L1011.5 92.5" stroke="#5a595d"/><path d="M1004.5 86.7 L1007.8 90 L1004.5 93.3 L1001.2 90Z" stroke="#cfcfcf"/>
<path d="M809.5 120.3 H938.6" stroke="#4a494d"/>
<path d="M809.5 120.3 H836" stroke="#e8e8e8" stroke-width="1.3"/>
<rect x="834.8" y="116.2" width="4" height="8" rx="1.2" fill="#f0f0f0" stroke="none"/>
<rect x="984" y="114.2" width="8.5" height="12.3" rx="1.5" fill="#3a393c" stroke="none"/><path d="M986.5 118.4 L988.25 116.60000000000001 L990 118.4 M986.5 122.0 L988.25 123.8 L990 122.0" stroke="#e0e0e0" stroke-width="1.1"/>
<path d="M998.5 117.7 L996.5 120.2 L998.5 122.7 M1011.5 117.7 L1013.5 120.2 L1011.5 122.7" stroke="#5a595d"/><path d="M1004.5 116.9 L1007.8 120.2 L1004.5 123.5 L1001.2 120.2Z" stroke="#cfcfcf"/>
<rect x="925" y="159.2" width="8.5" height="12.3" rx="1.5" fill="#3a393c" stroke="none"/><path d="M927.5 163.39999999999998 L929.25 161.6 L931 163.39999999999998 M927.5 167.0 L929.25 168.79999999999998 L931 167.0" stroke="#e0e0e0" stroke-width="1.1"/>
<rect x="984" y="159.2" width="8.5" height="12.3" rx="1.5" fill="#3a393c" stroke="none"/><path d="M986.5 163.39999999999998 L988.25 161.6 L990 163.39999999999998 M986.5 167.0 L988.25 168.79999999999998 L990 167.0" stroke="#e0e0e0" stroke-width="1.1"/>
<path d="M998.5 162.7 L996.5 165.2 L998.5 167.7 M1011.5 162.7 L1013.5 165.2 L1011.5 167.7" stroke="#5a595d"/><path d="M1004.5 161.89999999999998 L1007.8 165.2 L1004.5 168.5 L1001.2 165.2Z" stroke="#cfcfcf"/>
<rect x="923.5" y="182" width="8.5" height="12.3" rx="1.5" fill="#3a393c" stroke="none"/><path d="M926.0 186.2 L927.75 184.4 L929.5 186.2 M926.0 189.8 L927.75 191.6 L929.5 189.8" stroke="#e0e0e0" stroke-width="1.1"/>
<path d="M998.5 185.5 L996.5 188 L998.5 190.5 M1011.5 185.5 L1013.5 188 L1011.5 190.5" stroke="#5a595d"/><path d="M1004.5 184.7 L1007.8 188 L1004.5 191.3 L1001.2 188Z" stroke="#cfcfcf"/>
<circle cx="958.3" cy="188" r="5" fill="#111013" stroke="none"/><path d="M958.5 188.3 H961" stroke="#ddd"/>
<g stroke="#d6d6d6" stroke-width="1">
<path d="M817.0 208 V214 M818.0 209.5 H822.5 M818.0 212 H821.0"/>
<path d="M841.4 207.5 V214.5 M838.4 209.8 H844.4 M839.4 212.5 H843.4"/>
<path d="M865.0 208 V214 M864.0 209.5 H859.5 M864.0 212 H861.0"/>
<path d="M880 208 H886 M882 209 V214 M884.5 209 V212.5"/>
<path d="M900.5 211 H907.5 M902.8 208 V214 M905.5 209 V213"/>
<path d="M922.4 214 H928.4 M924.4 213 V208 M926.9 213 V210"/>
</g>
<g stroke="#48474b"><path d="M940 206 V216 M951 208 V214 M955 208 V214 M971 207 H977 M972 215 H976 M974 208 V214"/></g>
<path d="M810.8 243.4 L812.4 245 L815 242" stroke="#fff" stroke-width=".9"/>
<path d="M842 242.4 L844 244.6 L846 242.4Z" fill="#bdbdbd" stroke="none"/>
<path d="M981.1 242.20000000000002 A3.2 3.2 0 1 0 982.8 240.5" stroke="#d8d8d8" stroke-width="1"/><path d="M980.4 239.8 L980.8 242.6 L983.4 241.8" stroke="#d8d8d8" stroke-width="1"/>
<path d="M998.5 240.9 L996.5 243.4 L998.5 245.9 M1011.5 240.9 L1013.5 243.4 L1011.5 245.9" stroke="#5a595d"/><path d="M1004.5 240.1 L1007.8 243.4 L1004.5 246.70000000000002 L1001.2 243.4Z" stroke="#cfcfcf"/>
<path d="M851.4 275.40000000000003 L852.6 274.0 H856.1999999999999 L857.4 275.40000000000003 L854.4 279.20000000000005Z" fill="#8c7cf2" stroke="none"/>
<path d="M861.3 275.6 L863.3 277.8 L865.3 275.6Z" fill="#bdbdbd" stroke="none"/>
<path d="M873.9 307.8 L875.1 306.4 H878.6999999999999 L879.9 307.8 L876.9 311.6Z" fill="#8c7cf2" stroke="none"/>
<path d="M883.8 308 L885.8 310.2 L887.8 308Z" fill="#bdbdbd" stroke="none"/>
<path d="M886.8 340.5 L888.0 339.09999999999997 H891.5999999999999 L892.8 340.5 L889.8 344.3Z" fill="#8c7cf2" stroke="none"/>
<path d="M897 340.7 L899 342.9 L901 340.7Z" fill="#bdbdbd" stroke="none"/>
<path d="M862 373.3 L863.2 371.9 H866.8 L868 373.3 L865 377.1Z" fill="#8c7cf2" stroke="none"/>
<path d="M872 373.5 L874 375.7 L876 373.5Z" fill="#bdbdbd" stroke="none"/>
</svg>

<!-- ============ TIMELINE ============ -->
<div class="panel" style="left:3px;top:389px;width:1018px;height:200px;background:#262527"></div>
<div class="a" style="left:3px;top:389px;width:1018px;height:19px;background:#29282a;border-radius:5px 5px 0 0"></div>
<div class="a" style="left:3px;top:408px;width:1018px;height:1px;background:#1f1e21"></div>
<div class="a" style="left:75px;top:426px;width:1px;height:150px;background:#1e1d20"></div>

<div class="a" style="left:3px;top:467.6px;width:72px;height:35px;background:#2a292c"></div><div class="a" style="left:104px;top:467.6px;width:914.5px;height:36px;background:#2d2c2f"></div>
<svg style="left:0;top:0" width="1024" height="576" viewBox="0 0 1024 576" fill="none" stroke-width="1">
<g stroke="#d2d2d2">
<path d="M9.5 394.5 L15 397.5 L12.5 398.5 L14.5 402.5 L12.8 403.2 L11 399.3 L9.5 401Z"/>
<path d="M23.5 398 L25.3 399.8 L27.1 398"/>
<path d="M50.5 396.5 L53 394.5 M50.5 396.5 L53 398.5 M50.8 396.5 H56 Q58.3 396.5 58.3 399.3 Q58.3 402 56 402 H51.5"/>
<path d="M78.5 396.5 L76 394.5 M78.5 396.5 L76 398.5 M78.2 396.5 H73 Q70.7 396.5 70.7 399.3 Q70.7 402 73 402 H77.5" stroke="#5a595d"/>
<path d="M93 394.5 Q95 394.5 95 396.5 V401.5 Q95 403.5 93 403.5 M98.5 394.5 Q96.5 394.5 96.5 396.5 V401.5 Q96.5 403.5 98.5 403.5"/>
<path d="M115 394.5 H116.2 V403.5 H115 M120.5 394.5 Q118.5 394.5 118.5 396.5 V401.5 Q118.5 403.5 120.5 403.5" />
<path d="M136.5 394.5 Q138.5 394.5 138.5 396.5 V401.5 Q138.5 403.5 136.5 403.5 M142 394.5 H140.8 V403.5 H142"/>
<path d="M156.8 395.5 H164 M158.5 395.5 V394.3 H162.3 V395.5 M157.8 395.5 L158.4 403.5 H162.4 L163 395.5 M159.6 397.5 V401.5 M161.2 397.5 V401.5"/>
<path d="M178.3 394.8 H185 V400.5 L181.6 403.3 L178.3 400.5Z"/>
<path d="M199.5 396 H206 V400 M207.5 398.5 L206 400 L204.5 398.5 M206.5 402 H200 V398 M198.5 399.5 L200 398 L201.5 399.5 M199.5 394 V396 M206.5 402 V404"/>
<path d="M222 402 L225 395 L228.5 402 Z M229 403.5 L230 404.5 M220.5 403 L222 401"/>
</g>
<path d="M36.5 393 V405" stroke="#38373b"/>
<path d="M240 393 V405" stroke="#38373b"/>
<g stroke="#d2d2d2">
<rect x="249.5" y="394.5" width="8.5" height="7.5" rx="1" fill="#d2d2d2"/><path d="M251 396.8 H256.5 M251 399 H253.5" stroke="#262529"/><path d="M255.5 402.5 L258.5 404.5 M258.5 402.5 L255.5 404.5"/>
<path d="M271 396.5 H273.5 L276.5 394 V404 L273.5 401.5 H271Z" fill="#d2d2d2"/><path d="M278.5 395 V397 M277.5 396 H279.5 M278 400 Q279.5 401.5 278 403"/>
<circle cx="297" cy="397" r="1.8" fill="#d2d2d2"/><path d="M293 403.5 Q297 398.5 301 403.5Z" fill="#d2d2d2"/><path d="M300.5 394 V396.5 M299.3 395.2 H301.8"/>
<path d="M314.5 403.5 L320.5 397.5" stroke-width="2"/><path d="M315 395 V397 M314 396 H316 M321 393.5 V395.5 M320 394.5 H322"/>
<rect x="335" y="394.5" width="10" height="8" rx="1.5" fill="#d2d2d2"/><path d="M337 396.5 V400.5 M339.5 396.5 V400.5 M337 398.5 H339.5 M341 396.5 V400.5 Q343.5 400.5 343.5 398.5 Q343.5 396.5 341 396.5" stroke="#262529" stroke-width=".8"/><path d="M345.5 404 L347 405.5"/>
<path d="M357 395.5 H360 L361 394.5 H364 V403 H357Z" fill="#d2d2d2"/><path d="M359.5 397 L362 398.7 L359.5 400.4Z" fill="#262529" stroke="none"/><path d="M365 393.5 V395.5 M364 394.5 H366 M365 403.5 L366.5 405"/>
<path d="M378.5 397.5 V401.5 M380.5 395 V404 M382.5 396.5 V402.5 M384.5 398 V401 M385.5 393.5 V395.5 M384.5 394.5 H386.5 M385.5 403.5 L387 405"/>
</g>
<g stroke="#d2d2d2">
<rect x="763" y="393.5" width="3.6" height="6" rx="1.8" fill="#d2d2d2"/><path d="M761.5 398.5 Q761.5 402.3 764.8 402.3 Q768.2 402.3 768.2 398.5 M764.8 402.3 V404.5"/>
</g>
<path d="M780 393 V405 M890.5 393 V405" stroke="#38373b"/>
<rect x="788" y="392.5" width="13.299999999999955" height="13" rx="2" fill="#171618" stroke="none"/>
<rect x="809.5" y="392.5" width="13.0" height="13" rx="2" fill="#171618" stroke="none"/>
<rect x="830.7" y="392.5" width="13.599999999999909" height="13" rx="2" fill="#171618" stroke="none"/>
<rect x="860.7" y="392.5" width="13.0" height="13" rx="2" fill="#171618" stroke="none"/>
<rect x="844.3" y="392.5" width="8.5" height="13" rx="2" fill="#171618" stroke="none"/><rect x="873.7" y="392.5" width="8.5" height="13" rx="2" fill="#171618" stroke="none"/>
<g fill="#26b4be" stroke="none">
<rect x="789" y="396.3" width="4.2" height="5" rx="1"/><rect x="795.8" y="396.3" width="4.2" height="5" rx="1"/><rect x="793" y="398.3" width="3" height="1"/>
<rect x="810.5" y="396.5" width="11" height="5" rx="1"/><rect x="813" y="394" width="1" height="1"/><rect x="815.5" y="393.5" width="1" height="1.5"/><rect x="818" y="394" width="1" height="1"/><rect x="813" y="403" width="1" height="1"/><rect x="815.5" y="403" width="1" height="1"/><rect x="818" y="403" width="1" height="1"/>
<rect x="832" y="396.5" width="4.6" height="5" rx="1"/><rect x="838.4" y="396.5" width="4.6" height="5" rx="1"/><rect x="836.6" y="398.3" width="1.8" height="1"/>
<rect x="861.5" y="396.5" width="4" height="5" rx="1"/><rect x="866.5" y="394.5" width="1" height="9"/><rect x="868.5" y="396" width="3.5" height="6" rx="1"/>
</g>
<g fill="#0f2b2f" stroke="none"><rect x="790.3" y="397.8" width="1.6" height="2"/><rect x="797.1" y="397.8" width="1.6" height="2"/><rect x="815.5" y="397.8" width="1" height="2.4"/><rect x="833.5" y="397.8" width="1.6" height="2.4"/><rect x="839.9" y="397.8" width="1.6" height="2.4"/></g>
<path d="M846.8 398 L848.7 399.9 L850.6 398 M876.1 398 L878 399.9 L879.9 398" stroke="#f0f0f0" stroke-width="1.3"/>
<g stroke="#d2d2d2">
<path d="M900 396 V395 H909 V396 M900 400 V401.5 H909 V400" /><circle cx="904.5" cy="398.5" r="1.6"/>
<circle cx="926" cy="398.5" r="4"/><path d="M924 398.5 H928 M928.8 401.3 L930.3 402.8"/>
<circle cx="1012" cy="398.5" r="4"/><path d="M1010 398.5 H1014 M1012 396.5 V400.5 M1014.8 401.3 L1016.3 402.8"/>
</g>
<path d="M940.5 398.7 H997.4" stroke="#4a494d" stroke-width="1"/><path d="M940.5 398.7 H949" stroke="#e0e0e0" stroke-width="1.2"/><rect x="946.5" y="394.8" width="5" height="7.6" rx="1.5" fill="#f0f0f0" stroke="none"/>
<g stroke="#4d4c50"><path d="M105.5 411.5 V417.5" stroke="#6a696d"/><path d="M129.5 412 V414.5"/><path d="M141.5 412 V414.5"/><path d="M153.5 412 V414.5"/><path d="M165.5 412 V414.5"/><path d="M177.5 412 V414.5"/><path d="M189.5 412 V414.5"/><path d="M201.5 412 V414.5"/><path d="M213.5 412 V414.5"/><path d="M225.5 411.5 V417.5" stroke="#6a696d"/><path d="M249.5 412 V414.5"/><path d="M261.5 412 V414.5"/><path d="M273.5 412 V414.5"/><path d="M285.5 412 V414.5"/><path d="M297.5 412 V414.5"/><path d="M309.5 412 V414.5"/><path d="M321.5 412 V414.5"/><path d="M333.5 412 V414.5"/><path d="M345.5 411.5 V417.5" stroke="#6a696d"/><path d="M368.5 412 V414.5"/><path d="M380.5 412 V414.5"/><path d="M392.5 412 V414.5"/><path d="M404.5 412 V414.5"/><path d="M416.5 412 V414.5"/><path d="M428.5 412 V414.5"/><path d="M440.5 412 V414.5"/><path d="M452.5 412 V414.5"/><path d="M464.5 411.5 V417.5" stroke="#6a696d"/><path d="M488.5 412 V414.5"/><path d="M500.5 412 V414.5"/><path d="M512.5 412 V414.5"/><path d="M524.5 412 V414.5"/><path d="M536.5 412 V414.5"/><path d="M548.5 412 V414.5"/><path d="M560.5 412 V414.5"/><path d="M572.5 412 V414.5"/><path d="M584.5 411.5 V417.5" stroke="#6a696d"/><path d="M608.5 412 V414.5"/><path d="M620.5 412 V414.5"/><path d="M632.5 412 V414.5"/><path d="M644.5 412 V414.5"/><path d="M655.5 412 V414.5"/><path d="M667.5 412 V414.5"/><path d="M679.5 412 V414.5"/><path d="M691.5 412 V414.5"/><path d="M703.5 411.5 V417.5" stroke="#6a696d"/><path d="M727.5 412 V414.5"/><path d="M739.5 412 V414.5"/><path d="M751.5 412 V414.5"/><path d="M763.5 412 V414.5"/><path d="M775.5 412 V414.5"/><path d="M787.5 412 V414.5"/><path d="M799.5 412 V414.5"/><path d="M811.5 412 V414.5"/><path d="M823.5 411.5 V417.5" stroke="#6a696d"/><path d="M847.5 412 V414.5"/><path d="M859.5 412 V414.5"/><path d="M871.5 412 V414.5"/><path d="M883.5 412 V414.5"/><path d="M895.5 412 V414.5"/><path d="M907.5 412 V414.5"/><path d="M919.5 412 V414.5"/><path d="M931.5 412 V414.5"/><path d="M943.5 411.5 V417.5" stroke="#6a696d"/><path d="M966.5 412 V414.5"/><path d="M978.5 412 V414.5"/><path d="M990.5 412 V414.5"/><path d="M1002.5 412 V414.5"/><path d="M1014.5 412 V414.5"/></g>
</svg>
<div class="t" style="left:107.3px;top:408.3px;font-size:7.2px;color:#77767a">00:00</div>
<div class="t" style="left:226.9px;top:408.3px;font-size:7.2px;color:#77767a">00:02</div>
<div class="t" style="left:346.5px;top:408.3px;font-size:7.2px;color:#77767a">00:04</div>
<div class="t" style="left:466.1px;top:408.3px;font-size:7.2px;color:#77767a">00:06</div>
<div class="t" style="left:585.7px;top:408.3px;font-size:7.2px;color:#77767a">00:08</div>
<div class="t" style="left:705.3px;top:408.3px;font-size:7.2px;color:#77767a">00:10</div>
<div class="t" style="left:824.9px;top:408.3px;font-size:7.2px;color:#77767a">00:12</div>
<div class="t" style="left:944.5px;top:408.3px;font-size:7.2px;color:#77767a">00:14</div>
<svg style="left:0;top:0" width="1024" height="576" viewBox="0 0 1024 576" fill="none" stroke-width=".9">
<g stroke="#9c9c9c"><rect x="7.5" y="482.3" width="6.5" height="6.4" rx=".5" stroke="#7a797d"/><circle cx="10.7" cy="485.5" r=".6" fill="#8a898d"/><path d="M23 484.7 V483.7 Q24.8 481.3 26.6 483.7 V484.7"/><rect x="22.3" y="484.7" width="5" height="4" rx=".8" fill="#a4a4a4"/><path d="M35.5 485.5 Q39 482.0 42.5 485.5 Q39 489.0 35.5 485.5Z"/><circle cx="39" cy="485.5" r="1.2" fill="#a4a4a4"/><path d="M50.5 484.0 H52 L54.5 482.0 V489.0 L52 487.0 H50.5Z M56 484.0 V487.0 M57.5 483.0 V488.0"/><path d="M65 485.5 H65.8 M67.3 485.5 H68.1 M69.6 485.5 H70.4" stroke="#9a9a9a" stroke-width="1"/></g>
<g stroke="#9c9c9c"><rect x="7.5" y="525.8" width="6.5" height="6.4" rx=".5" stroke="#7a797d"/><circle cx="10.7" cy="529" r=".6" fill="#8a898d"/><path d="M23 528.2 V527.2 Q24.8 524.8 26.6 527.2 V528.2"/><rect x="22.3" y="528.2" width="5" height="4" rx=".8" fill="#a4a4a4"/><path d="M35.5 529 Q39 525.5 42.5 529 Q39 532.5 35.5 529Z"/><circle cx="39" cy="529" r="1.2" fill="#a4a4a4"/><path d="M50.5 527.5 H52 L54.5 525.5 V532.5 L52 530.5 H50.5Z M56 527.5 V530.5 M57.5 526.5 V531.5"/><path d="M65 529 H65.8 M67.3 529 H68.1 M69.6 529 H70.4" stroke="#9a9a9a" stroke-width="1"/></g>
</svg>
<div class="a" style="left:79px;top:517.3px;width:21.7px;height:22.7px;background:#333236;border-radius:3px"></div>
<svg style="left:0;top:0" width="200" height="576" viewBox="0 0 200 576" fill="none" stroke="#d8d8d8" stroke-width=".9"><path d="M87.5 525.5 L91 522 L92.2 523.2 L88.7 526.7 H87.5Z M87 527.5 H92.5"/></svg>
<div class="t c" style="left:79px;width:21.7px;top:527.5px;font-size:6.90px;color:#e0e0e0">Cover</div>
<div class="a" style="left:104.2px;top:467.8px;width:303.6px;height:35px;background:#0b545a;border:1px solid #f0f0f0;border-radius:2px;overflow:hidden"><div class="a" style="left:0;top:9.5px;width:100%;height:14.7px;background:#fff"></div><div class="a" style="left:0;top:28px;width:100%;height:1px;background:#0b5055"></div></div>
<div class="a" style="left:106.2px;top:469px;width:23px;height:9px;background:#0b545a"></div>
<div class="a" style="left:129.5px;top:469px;width:35px;height:9px;background:#12636a"></div>
<div class="t" style="left:109.5px;top:467.3px;font-size:6.67px;color:#cfe3e4">white</div>
<div class="t" style="left:130px;top:467.3px;font-size:6.67px;color:#cfe3e4">00:00:05:01</div>
<div class="a" style="left:104.5px;top:506px;width:302px;height:44.5px;background:#0b545a;border-radius:2px;overflow:hidden"><div class="a" style="left:0;top:12.3px;width:100%;height:21.7px;background:#010101"></div><div class="a" style="left:0;top:34px;width:100%;height:1px;background:#0f6066"></div></div>
<div class="a" style="left:129.5px;top:507px;width:35px;height:9.5px;background:#12636a"></div>
<div class="t" style="left:109.5px;top:506.3px;font-size:6.67px;color:#cfe3e4">black</div>
<div class="t" style="left:130px;top:506.3px;font-size:6.67px;color:#cfe3e4">00:00:05:01</div>
<div class="a" style="left:105.5px;top:491.5px;width:3px;height:3px;border-radius:50%;background:#111"></div>
<div class="a" style="left:403.5px;top:491.5px;width:3px;height:3px;border-radius:50%;background:#111"></div>
<div class="a" style="left:129.7px;top:408.5px;width:1px;height:168px;background:#a08c3c"></div>
<div class="a" style="left:105.5px;top:416px;width:1px;height:160px;background:#a9a9a9"></div>
<svg style="left:0;top:0" width="200" height="576" viewBox="0 0 200 576"><path d="M103 409.5 H108.5 V414.5 L105.75 417 L103 414.5Z" fill="#232226" stroke="#e8e8e8" stroke-width="1.2"/><path d="M130.5 487 V497 L133 494.8 L135 499 L136.5 498.3 L134.6 494.3 L138 494Z" fill="#111" stroke="#eee" stroke-width=".7"/></svg>
</body></html>
